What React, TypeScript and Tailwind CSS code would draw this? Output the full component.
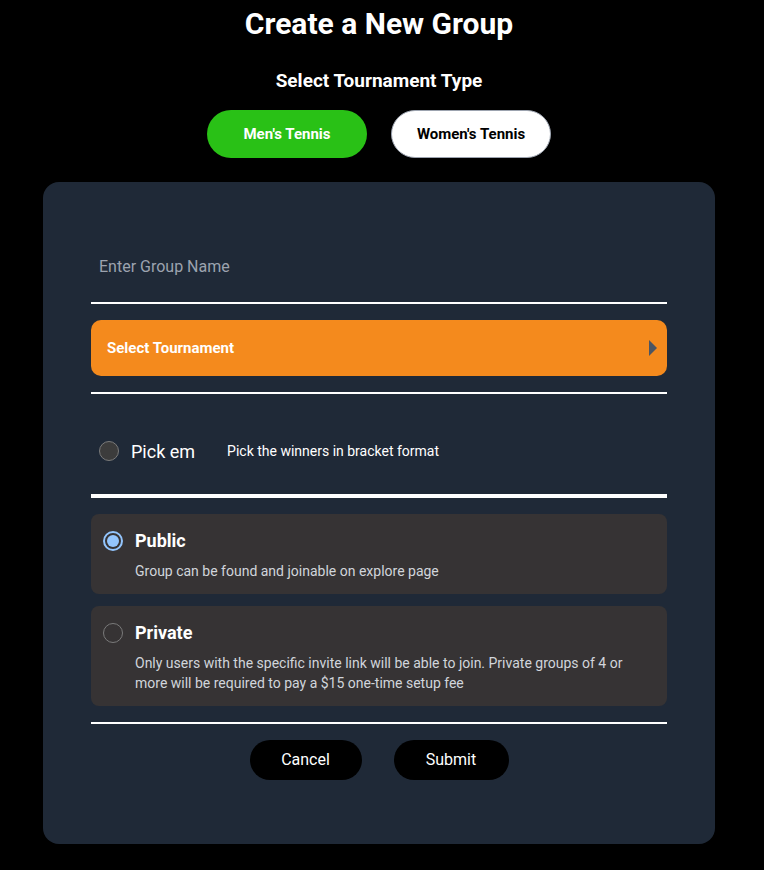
import React from "react";

export default function App() {
  const font = { fontFamily: "Roboto, 'Noto Sans', sans-serif" };
  return (
    <div className="min-h-[870px] w-full bg-black text-white flex flex-col items-center pr-[6px]" style={font}>
      <h1 className="mt-[6px] text-[30px] leading-[36px] font-bold text-center">Create a New Group</h1>
      <h2 className="mt-[25px] text-[19px] leading-[28px] font-bold text-center">Select Tournament Type</h2>
      <div className="mt-[15px] flex gap-6">
        <button className="w-[160px] h-[48px] rounded-full bg-[#29c116] text-white text-[15px] font-bold">Men's Tennis</button>
        <button className="w-[160px] h-[48px] rounded-full bg-white border border-[#9ca3af] text-black text-[15px] font-bold">Women's Tennis</button>
      </div>
      <div className="mt-[24px] w-[672px] h-[662px] rounded-2xl bg-[#1f2937] px-12 pt-[48px] flex flex-col">
        <div className="h-[74px] border-b-2 border-white flex items-center px-2 pt-[2px]">
          <input
            className="w-full bg-transparent outline-none text-[16px] text-white placeholder:text-[#9ca3af]"
            placeholder="Enter Group Name"
          />
        </div>
        <button className="mt-[16px] h-[56px] rounded-[10px] bg-[#f48a1d] flex items-center justify-between pl-4 pr-2 text-white text-[15px] font-bold">
          <span>Select Tournament</span>
          <svg width="10" height="16" viewBox="0 0 10 16"><path d="M0 0 L8 8 L0 16 Z" fill="#4b5563" /></svg>
        </button>
        <div className="mt-[16px] h-[2px] bg-white" />
        <div className="h-[104px] flex items-start pt-[45px] px-2 border-b-4 border-white">
          <div className="flex items-center h-6">
            <span className="w-5 h-5 rounded-full bg-[#3c3c3c] border border-[#7a7a7a] shrink-0" />
            <span className="ml-3 text-[18px]">Pick em</span>
            <span className="ml-8 text-[14px]">Pick the winners in bracket format</span>
          </div>
        </div>
        <div className="mt-[16px] rounded-lg bg-[#363334] h-[80px] px-3 pt-[13px]">
          <div className="flex items-center">
            <span className="w-5 h-5 rounded-full border-2 border-[#93c5fd] flex items-center justify-center shrink-0">
              <span className="w-3 h-3 rounded-full bg-[#93c5fd]" />
            </span>
            <span className="ml-3 text-[18px] font-bold">Public</span>
          </div>
          <p className="ml-8 mt-[7px] text-[14px] text-[#d1d5db]">Group can be found and joinable on explore page</p>
        </div>
        <div className="mt-[12px] rounded-lg bg-[#363334] h-[100px] px-3 pt-[13px]">
          <div className="flex items-center">
            <span className="w-5 h-5 rounded-full border border-[#7a7a7a] shrink-0" />
            <span className="ml-3 text-[18px] font-bold">Private</span>
          </div>
          <p className="ml-8 mt-[7px] text-[14px] leading-[20px] text-[#d1d5db]">
            Only users with the specific invite link will be able to join. Private groups of 4 or more will be required to pay a $15 one-time setup fee
          </p>
        </div>
        <div className="mt-[16px] h-[2px] bg-white" />
        <div className="mt-[16px] flex justify-center gap-8">
          <button className="w-[112px] h-[40px] rounded-full bg-black text-white text-[16px]">Cancel</button>
          <button className="w-[115px] h-[40px] rounded-full bg-black text-white text-[16px]">Submit</button>
        </div>
      </div>
    </div>
  );
}
